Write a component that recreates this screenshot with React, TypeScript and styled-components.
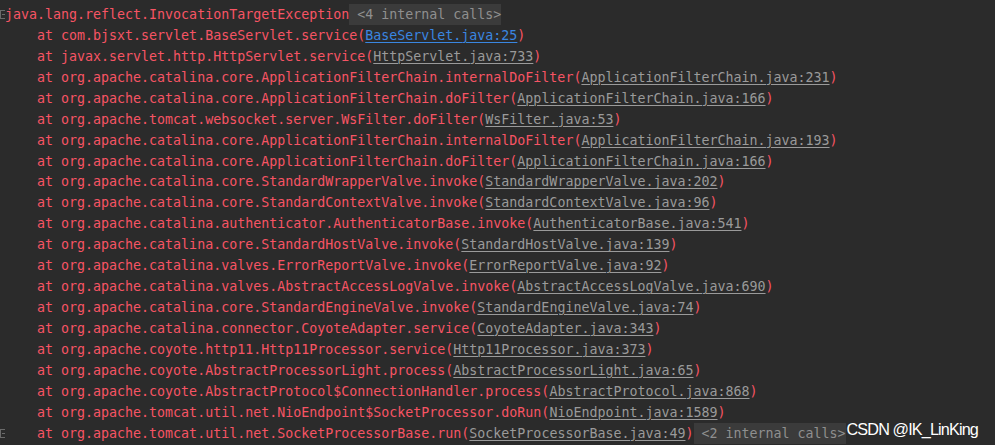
import React from "react";
import styled, { createGlobalStyle } from "styled-components";

const GlobalStyle = createGlobalStyle`
  html, body {
    margin: 0;
    padding: 0;
    background: #2b2b2b;
  }
`;

const Console = styled.div`
  position: relative;
  width: 995px;
  height: 445px;
  overflow: hidden;
  background: #2b2b2b;
  padding-top: 4px;
  box-sizing: border-box;
  font-family: "DejaVu Sans Mono", "Liberation Mono", monospace;
  font-size: 13.3px;
  color: #f75464;
`;

const Line = styled.div`
  display: flex;
  align-items: center;
  height: 20.95px;
  white-space: pre;
`;

const Gutter = styled.span`
  width: 5px;
  height: 100%;
  flex: none;
  display: flex;
  align-items: center;
  justify-content: flex-end;
  overflow: hidden;
`;

const Link = styled.span<{ $active?: boolean }>`
  color: ${(p) => (p.$active ? "#3a86e0" : "#9a9a9a")};
  text-decoration: underline;
  text-underline-offset: 2px;
  text-decoration-thickness: 1px;
`;

const Folded = styled.span`
  display: inline-flex;
  align-items: center;
  height: 20.95px;
  background: #3b3b3b;
  color: #8f8f8f;
`;

const Watermark = styled.div`
  position: absolute;
  right: 17px;
  bottom: 6px;
  font-family: "Liberation Sans", Arial, sans-serif;
  font-size: 16.2px;
  letter-spacing: -0.85px;
  color: #ffffff;
`;

const FoldIcon = () => (
  <svg width="9" height="9" viewBox="0 0 9 9" style={{ flex: "none", marginRight: "-4px" }}>
    <rect x="0.5" y="0.5" width="8" height="8" fill="none" stroke="#6a6a6a" />
    <line x1="2" y1="4.5" x2="7" y2="4.5" stroke="#6a6a6a" />
  </svg>
);

type Frame = { call: string; file: string };

const frames: Frame[] = [
  { call: "com.bjsxt.servlet.BaseServlet.service", file: "BaseServlet.java:25" },
  { call: "javax.servlet.http.HttpServlet.service", file: "HttpServlet.java:733" },
  { call: "org.apache.catalina.core.ApplicationFilterChain.internalDoFilter", file: "ApplicationFilterChain.java:231" },
  { call: "org.apache.catalina.core.ApplicationFilterChain.doFilter", file: "ApplicationFilterChain.java:166" },
  { call: "org.apache.tomcat.websocket.server.WsFilter.doFilter", file: "WsFilter.java:53" },
  { call: "org.apache.catalina.core.ApplicationFilterChain.internalDoFilter", file: "ApplicationFilterChain.java:193" },
  { call: "org.apache.catalina.core.ApplicationFilterChain.doFilter", file: "ApplicationFilterChain.java:166" },
  { call: "org.apache.catalina.core.StandardWrapperValve.invoke", file: "StandardWrapperValve.java:202" },
  { call: "org.apache.catalina.core.StandardContextValve.invoke", file: "StandardContextValve.java:96" },
  { call: "org.apache.catalina.authenticator.AuthenticatorBase.invoke", file: "AuthenticatorBase.java:541" },
  { call: "org.apache.catalina.core.StandardHostValve.invoke", file: "StandardHostValve.java:139" },
  { call: "org.apache.catalina.valves.ErrorReportValve.invoke", file: "ErrorReportValve.java:92" },
  { call: "org.apache.catalina.valves.AbstractAccessLogValve.invoke", file: "AbstractAccessLogValve.java:690" },
  { call: "org.apache.catalina.core.StandardEngineValve.invoke", file: "StandardEngineValve.java:74" },
  { call: "org.apache.catalina.connector.CoyoteAdapter.service", file: "CoyoteAdapter.java:343" },
  { call: "org.apache.coyote.http11.Http11Processor.service", file: "Http11Processor.java:373" },
  { call: "org.apache.coyote.AbstractProcessorLight.process", file: "AbstractProcessorLight.java:65" },
  { call: "org.apache.coyote.AbstractProtocol$ConnectionHandler.process", file: "AbstractProtocol.java:868" },
  { call: "org.apache.tomcat.util.net.NioEndpoint$SocketProcessor.doRun", file: "NioEndpoint.java:1589" },
  { call: "org.apache.tomcat.util.net.SocketProcessorBase.run", file: "SocketProcessorBase.java:49" },
];

export default function App() {
  const last = frames.length - 1;
  return (
    <>
      <GlobalStyle />
      <Console>
        <Line>
          <Gutter>
            <FoldIcon />
          </Gutter>
          java.lang.reflect.InvocationTargetException
          <Folded> &lt;4 internal calls&gt;</Folded>
        </Line>
        {frames.map((f, i) => (
          <Line key={i}>
            <Gutter>{i === last && <FoldIcon />}</Gutter>
            {"    at " + f.call + "("}
            <Link $active={i === 0}>{f.file}</Link>
            {")"}
            {i === last && <Folded> &lt;2 internal calls&gt;</Folded>}
          </Line>
        ))}
        <Watermark>CSDN @IK_LinKing</Watermark>
      </Console>
    </>
  );
}
